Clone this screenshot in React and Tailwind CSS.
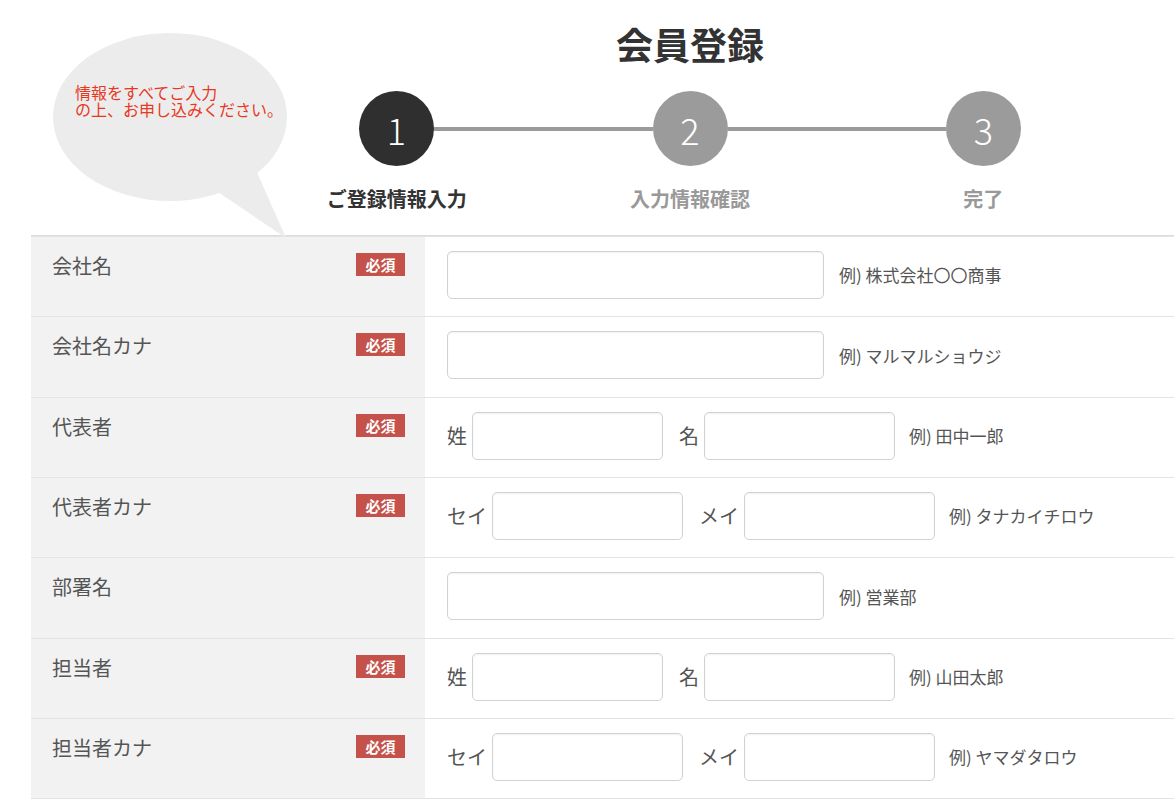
const FONT = "font-['Noto_Sans_CJK_JP','Noto_Sans',sans-serif]"

const steps = [
  { no: '1', label: 'ご登録情報入力', active: true },
  { no: '2', label: '入力情報確認' },
  { no: '3', label: '完了' },
]

const rows = [
  { label: '会社名', required: true, type: 'single', example: '例) 株式会社〇〇商事' },
  { label: '会社名カナ', required: true, type: 'single', example: '例) マルマルショウジ' },
  { label: '代表者', required: true, type: 'pair', a: '姓', b: '名', example: '例) 田中一郎' },
  { label: '代表者カナ', required: true, type: 'pair', a: 'セイ', b: 'メイ', example: '例) タナカイチロウ' },
  { label: '部署名', required: false, type: 'single', example: '例) 営業部' },
  { label: '担当者', required: true, type: 'pair', a: '姓', b: '名', example: '例) 山田太郎' },
  { label: '担当者カナ', required: true, type: 'pair', a: 'セイ', b: 'メイ', example: '例) ヤマダタロウ' },
]

function TextInput({ w }) {
  return (
    <input
      type="text"
      className={`${w} h-[48px] shrink-0 rounded-[5px] border border-[#d2d2d2] bg-white shadow-[inset_0_1px_2px_rgba(0,0,0,0.06)] outline-none`}
    />
  )
}

function Bubble() {
  return (
    <div className="absolute left-0 top-0 z-10 w-[300px] h-[240px] pointer-events-none">
      <svg width="300" height="240" viewBox="0 0 300 240" className="absolute left-0 top-0">
        <ellipse cx="170" cy="117" rx="117" ry="84" fill="#ececec" />
        <polygon points="212,188 256,170 286,238" fill="#ececec" />
      </svg>
      <p className="absolute left-[75px] top-[84px] text-[16px] leading-[17px] text-[#e8381f]">
        情報をすべてご入力
        <br />
        の上、お申し込みください。
      </p>
    </div>
  )
}

function Row({ row }) {
  return (
    <div className="flex h-[80.33px] border-t border-[#e3e3e3]">
      {/* label */}
      <div className="w-[394px] shrink-0 bg-[#f2f2f2] flex items-start justify-between pl-[21px] pr-[20px] pt-[14px]">
        <span className="text-[20px] leading-[30px] text-[#555]">{row.label}</span>
        {row.required && (
          <span className="mt-[2px] w-[49px] h-[23px] flex items-center justify-center bg-[#c4524b] text-white text-[15px] font-bold leading-none">
            必須
          </span>
        )}
      </div>

      {/* field */}
      <div className="flex-1 bg-white flex items-start pl-[22px] pt-[14px]">
        {row.type === 'single' ? (
          <div className="flex items-center h-[48px]">
            <TextInput w="w-[377px]" />
            <span className="ml-[15px] text-[17px] text-[#555]">{row.example}</span>
          </div>
        ) : (
          <div className="flex items-center h-[48px] text-[20px] text-[#555]">
            <span>{row.a}</span>
            <span className="ml-[5px]">
              <TextInput w="w-[191px]" />
            </span>
            <span className="ml-[16px]">{row.b}</span>
            <span className="ml-[5px]">
              <TextInput w="w-[191px]" />
            </span>
            <span className="ml-[14px] text-[17px]">{row.example}</span>
          </div>
        )}
      </div>
    </div>
  )
}

export default function App() {
  return (
    <div className={`${FONT} relative w-[1174px] h-[800px] overflow-hidden bg-white`}>
      <Bubble />

      {/* title + steps */}
      <div className="ml-[250px] w-[880px]">
        <h1 className="pt-[22px] text-center text-[37px] leading-[44px] font-bold text-[#333]">会員登録</h1>

        <div className="mt-[25px] flex items-center px-[109px]">
          {steps.map((s, i) => (
            <div key={s.no} className={i < 2 ? 'flex items-center flex-1' : 'flex items-center'}>
              <div
                className={`w-[75px] h-[75px] shrink-0 rounded-full flex items-center justify-center text-white text-[36px] font-light leading-none ${s.active ? 'bg-[#2f2f2f]' : 'bg-[#9b9b9b]'}`}
              >
                {s.no}
              </div>
              {i < 2 && <div className="flex-1 h-[4px] bg-[#9b9b9b]" />}
            </div>
          ))}
        </div>

        <div className="mt-[18px] grid grid-cols-3">
          {steps.map(s => (
            <div
              key={s.no}
              className={`text-center text-[20px] leading-[30px] font-bold ${s.active ? 'text-[#333]' : 'text-[#999]'}`}
            >
              {s.label}
            </div>
          ))}
        </div>
      </div>

      {/* form table */}
      <div className="mt-[21px] ml-[31px] border-t border-[#dcdcdc]">
        {rows.map(r => (
          <Row key={r.label} row={r} />
        ))}
        <div className="border-t border-[#e3e3e3]" />
      </div>
    </div>
  )
}
